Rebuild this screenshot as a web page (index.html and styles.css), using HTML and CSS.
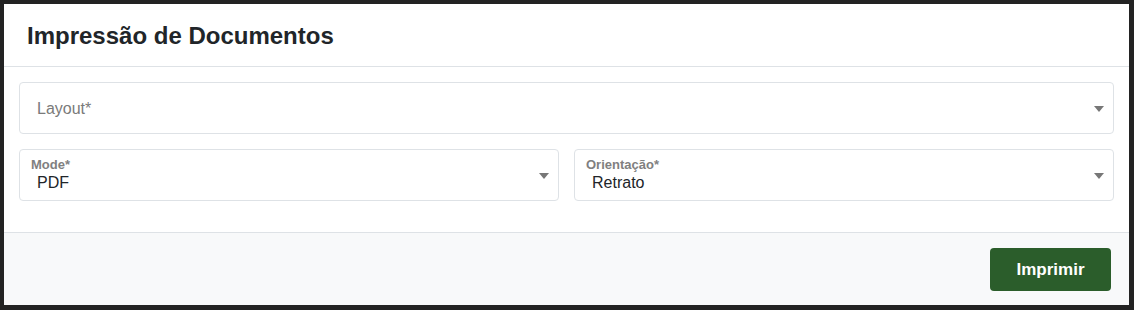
FILE: index.html
```html
<!DOCTYPE html>
<html lang="pt">
<head>
<meta charset="utf-8">
<link rel="stylesheet" href="styles.css">
</head>
<body>
<div class="modal">
  <div class="modal-header">
    <h1 class="title">Impressão de Documentos</h1>
  </div>
  <div class="modal-body">
    <div class="select select-empty">
      <span class="placeholder">Layout*</span>
      <span class="arrow"></span>
    </div>
    <div class="row">
      <div class="select select-filled">
        <div class="field">
          <span class="label">Mode*</span>
          <span class="value">PDF</span>
        </div>
        <span class="arrow"></span>
      </div>
      <div class="select select-filled">
        <div class="field">
          <span class="label">Orientação*</span>
          <span class="value">Retrato</span>
        </div>
        <span class="arrow"></span>
      </div>
    </div>
  </div>
  <div class="modal-footer">
    <button class="btn">Imprimir</button>
  </div>
</div>
</body>
</html>
```

FILE: styles.css
```css
html, body {
  margin: 0;
  padding: 0;
}
body {
  background: #232323;
  font-family: "Liberation Sans", Arial, sans-serif;
  padding: 4px 5px 5px 4px;
  height: 310px;
  box-sizing: border-box;
}
.modal {
  background: #fff;
  height: 301px;
  display: flex;
  flex-direction: column;
}
.modal-header {
  height: 63px;
  box-sizing: border-box;
  border-bottom: 1px solid #dee2e6;
  padding: 0 23px;
  display: flex;
  align-items: center;
}
.title {
  margin: 0;
  font-size: 24px;
  font-weight: 700;
  color: #212529;
  line-height: 28px;
  padding-top: 1px;
}
.modal-body {
  padding: 15px 15px 31px 15px;
  display: flex;
  flex-direction: column;
  gap: 15px;
  border-bottom: 1px solid #dee2e6;
}
.row {
  display: flex;
  gap: 15px;
}
.row .select {
  flex: 1;
}
.select {
  height: 52px;
  box-sizing: border-box;
  border: 1px solid #dee2e6;
  border-radius: 4px;
  display: flex;
  align-items: center;
  padding: 0 9px 0 17px;
}
.placeholder {
  flex: 1;
  font-size: 16px;
  color: #7a7a7a;
  padding-top: 1px;
}
.field {
  flex: 1;
  display: flex;
  flex-direction: column;
  margin-left: -6px;
}
.label {
  font-size: 13px;
  font-weight: 700;
  color: #808080;
  line-height: 15px;
  margin-top: -2px;
}
.value {
  font-size: 16px;
  color: #212529;
  line-height: 18px;
  margin-left: 6px;
  margin-top: 2px;
}
.arrow {
  width: 0;
  height: 0;
  border-left: 5px solid transparent;
  border-right: 5px solid transparent;
  border-top: 6px solid #777;
  margin-top: 2px;
}
.modal-footer {
  flex: 1;
  background: #f8f9fa;
  display: flex;
  justify-content: flex-end;
  align-items: flex-start;
  padding: 15px 18px 0 0;
}
.btn {
  width: 121px;
  height: 43px;
  background: #2b5d2b;
  color: #fff;
  border: none;
  border-radius: 4px;
  font-family: "Liberation Sans", Arial, sans-serif;
  font-size: 17px;
  font-weight: 700;
}
```
